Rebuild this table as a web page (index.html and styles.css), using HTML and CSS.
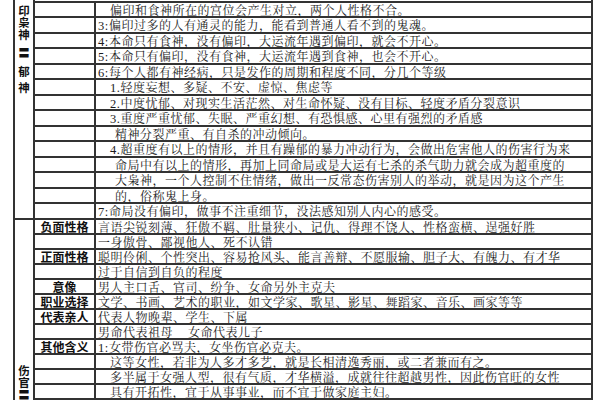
FILE: index.html
```html
<!DOCTYPE html>
<html lang="zh-CN">
<head>
<meta charset="utf-8">
<title>偏印 伤官</title>
<link rel="stylesheet" href="styles.css">
</head>
<body>
<div class="sheet">
  <div class="section sec1">
    <div class="vcol">
      <div class="vstack s1">
        <span class="g g-yin">印</span>
        <span class="g">枭</span>
        <span class="g">神</span>
        <span class="g g-eq1">〓</span>
        <span class="g g-yu">郁</span>
        <span class="g g-shen">神</span>
      </div>
    </div>
    <div class="rows first">
      <div class="row"><div class="lab"></div><div class="txt i1">偏印和食神所在的宫位会产生对立，两个人性格不合。</div></div>
      <div class="row"><div class="lab"></div><div class="txt"><span class="n">3:</span>偏印过多的人有通灵的能力，能看到普通人看不到的鬼魂。</div></div>
      <div class="row"><div class="lab"></div><div class="txt"><span class="n">4:</span>本命只有食神，没有偏印，大运流年遇到偏印，就会不开心。</div></div>
      <div class="row"><div class="lab"></div><div class="txt"><span class="n">5:</span>本命只有偏印，没有食神，大运流年遇到食神，也会不开心。</div></div>
      <div class="row"><div class="lab"></div><div class="txt"><span class="n">6:</span>每个人都有神经病，只是发作的周期和程度不同，分几个等级</div></div>
      <div class="row"><div class="lab"></div><div class="txt i1"><span class="n">1.</span>轻度妄想、多疑、不安、虚惊、焦虑等</div></div>
      <div class="row"><div class="lab"></div><div class="txt i1"><span class="n">2.</span>中度忧郁、对现实生活茫然、对生命怀疑、没有目标、轻度矛盾分裂意识</div></div>
      <div class="row"><div class="lab"></div><div class="txt i1"><span class="n">3.</span>重度严重忧郁、失眠、严重幻想、有恐惧感、心里有强烈的矛盾感</div></div>
      <div class="row"><div class="lab"></div><div class="txt i2">精神分裂严重、有自杀的冲动倾向。</div></div>
      <div class="row"><div class="lab"></div><div class="txt i1"><span class="n">4.</span>超重度有以上的情形，并且有躁郁的暴力冲动行为，会做出危害他人的伤害行为来</div></div>
      <div class="row"><div class="lab"></div><div class="txt i2">命局中有以上的情形，再加上同命局或是大运有七杀的杀气助力就会成为超重度的</div></div>
      <div class="row"><div class="lab"></div><div class="txt i2">大枭神，一个人控制不住情绪，做出一反常态伤害别人的举动，就是因为这个产生</div></div>
      <div class="row"><div class="lab"></div><div class="txt i2">的，俗称鬼上身。</div></div>
      <div class="row"><div class="lab"></div><div class="txt"><span class="n">7:</span>命局没有偏印，做事不注重细节，没法感知别人内心的感受。</div></div>
    </div>
  </div>
  <div class="section sec2">
    <div class="vcol">
      <div class="vstack s2">
        <span class="g">伤</span>
        <span class="g">官</span>
        <span class="g">〓</span>
      </div>
    </div>
    <div class="rows">
      <div class="row"><div class="lab">负面性格</div><div class="txt">言语尖锐刻薄、狂傲不羁、肚量狭小、记仇、得理不饶人、性格蛮横、逞强好胜</div></div>
      <div class="row"><div class="lab"></div><div class="txt">一身傲骨、鄙视他人、死不认错</div></div>
      <div class="row"><div class="lab">正面性格</div><div class="txt">聪明伶俐、个性突出、容易抢风头、能言善辩、不愿服输、胆子大、有魄力、有才华</div></div>
      <div class="row"><div class="lab"></div><div class="txt">过于自信到自负的程度</div></div>
      <div class="row"><div class="lab">意像</div><div class="txt">男人主口舌、官司、纷争、女命另外主克夫</div></div>
      <div class="row"><div class="lab">职业选择</div><div class="txt">文学、书画、艺术的职业，如文学家、歌星、影星、舞蹈家、音乐、画家等等</div></div>
      <div class="row"><div class="lab">代表亲人</div><div class="txt">代表人物晚辈、学生、下属</div></div>
      <div class="row"><div class="lab"></div><div class="txt">男命代表祖母<span class="gap"></span>女命代表儿子</div></div>
      <div class="row"><div class="lab">其他含义</div><div class="txt"><span class="n">1:</span>女带伤官必骂夫，女坐伤官必克夫。</div></div>
      <div class="row"><div class="lab"></div><div class="txt i1">这等女性，若非为人多才多艺，就是长相清逸秀丽，或二者兼而有之。</div></div>
      <div class="row"><div class="lab"></div><div class="txt i1">多半属于女强人型，很有气质，才华横溢，成就往往超越男性，因此伤官旺的女性</div></div>
      <div class="row"><div class="lab"></div><div class="txt i1">具有开拓性，宜于从事事业，而不宜于做家庭主妇。</div></div>
      <div class="row"><div class="lab"></div><div class="txt"></div></div>
      <div class="row"><div class="lab"></div><div class="txt"></div></div>
    </div>
  </div>
</div>
</body>
</html>
```

FILE: styles.css
```css
html, body {
  margin: 0;
  padding: 0;
  background: #ffffff;
}

body {
  overflow: hidden;
  color: #1c1c1c;
  font-family: "Noto Serif CJK SC", "Noto Sans CJK SC", sans-serif;
}

.sheet {
  margin-left: 13px;
  width: 580px;
  box-sizing: border-box;
  border-left: 2px solid #333;
  border-right: 2px solid #333;
}

.section {
  display: flex;
}

.vcol {
  width: 18px;
  flex: none;
  border-right: 2px solid #333;
  border-bottom: 2px solid #333;
  overflow: hidden;
}

.vstack {
  display: flex;
  flex-direction: column;
  align-items: center;
  font-family: "Noto Sans CJK SC", sans-serif;
  font-weight: 700;
  font-size: 11.5px;
  line-height: 12px;
  color: #111;
}

.s1 {
  padding-top: 4px;
}

.s2 {
  padding-top: 144px;
}

.g {
  display: block;
  height: 12px;
}

.g-eq1 {
  margin-top: 6px;
}

.g-yu {
  margin-top: 7px;
}

.g-shen {
  margin-top: 4px;
}

.rows {
  flex: 1;
  display: flex;
  flex-direction: column;
  min-width: 0;
}

.rows.first {
  margin-top: 1px;
  border-top: 2px solid #333;
}

.row {
  display: flex;
  box-sizing: border-box;
  border-bottom: 2px solid #333;
}

.sec1 .row {
  height: 15.47px;
}

.sec2 .row {
  height: 15px;
}

.lab {
  width: 59px;
  flex: none;
  border-right: 2px solid #333;
  text-align: center;
  font-family: "Noto Sans CJK SC", sans-serif;
  font-weight: 700;
  font-size: 12px;
  line-height: 13px;
  color: #111;
  white-space: nowrap;
}

.txt {
  flex: 1;
  min-width: 0;
  padding-left: 2px;
  font-size: 12px;
  letter-spacing: 0.5px;
  line-height: 13px;
  white-space: nowrap;
}

.sec1 .txt {
  line-height: 13.4px;
}

.txt.i1 {
  padding-left: 14px;
}

.txt.i2 {
  padding-left: 19px;
}

.n {
  font-family: "Liberation Serif", serif;
  font-size: 12.5px;
  letter-spacing: 0.6px;
}

.gap {
  display: inline-block;
  width: 15px;
}
```
